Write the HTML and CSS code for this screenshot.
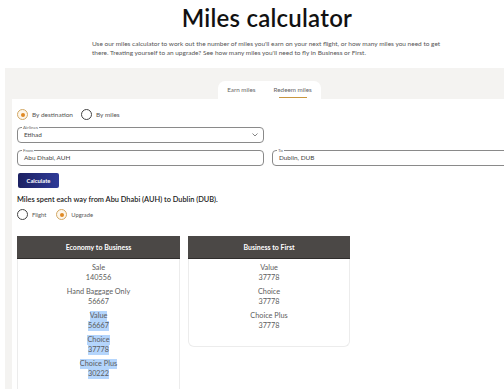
FILE: index.html
```html
<!DOCTYPE html>
<html lang="en">
<head>
  <meta charset="UTF-8" />
  <meta name="viewport" content="width=device-width, initial-scale=1.0"/>
  <title>Miles calculator</title>
  <link rel="stylesheet" href="styles.css">
</head>
<body>
  <div class="page">
    <header class="intro">
      <h1>Miles calculator</h1>
      <p>Use our miles calculator to work out the number of miles you'll earn on your next flight, or how many miles you need to get there. Treating yourself to an upgrade? See how many miles you'll need to fly in Business or First.</p>
    </header>

    <section class="calc">
      <div class="tabs">
        <span class="tab">Earn miles</span>
        <span class="tab active">Redeem miles</span>
      </div>

      <div class="calc-card">
        <div class="radio-row">
          <label class="radio checked"><span class="dot"></span>By destination</label>
          <label class="radio"><span class="dot"></span>By miles</label>
        </div>

        <fieldset class="field field-half">
          <legend>Airlines</legend>
          <div class="field-value">
            <span>Etihad</span>
            <svg class="chevron" width="6" height="4" viewBox="0 0 6 4"><polyline points="0.5,0.5 3,3 5.5,0.5" fill="none" stroke="#666" stroke-width="0.8"/></svg>
          </div>
        </fieldset>

        <div class="route">
          <fieldset class="field">
            <legend>From</legend>
            <div class="field-value">Abu Dhabi, AUH</div>
          </fieldset>
          <fieldset class="field">
            <legend>To</legend>
            <div class="field-value">Dublin, DUB</div>
          </fieldset>
        </div>

        <button class="btn-calc">Calculate</button>

        <p class="result-title">Miles spent each way from Abu Dhabi (AUH) to Dublin (DUB).</p>

        <div class="radio-row small">
          <label class="radio"><span class="dot"></span>Flight</label>
          <label class="radio checked"><span class="dot"></span>Upgrade</label>
        </div>

        <div class="fares">
          <div class="fare-card">
            <div class="fare-head">Economy to Business</div>
            <div class="fare-body">
              <div class="fare"><span>Sale</span><span>140556</span></div>
              <div class="fare"><span>Hand Baggage Only</span><span>56667</span></div>
              <div class="fare sel"><span>Value</span><span>56667</span></div>
              <div class="fare sel"><span>Choice</span><span>37778</span></div>
              <div class="fare sel"><span>Choice Plus</span><span>30222</span></div>
            </div>
          </div>
          <div class="fare-card short">
            <div class="fare-head">Business to First</div>
            <div class="fare-body">
              <div class="fare"><span>Value</span><span>37778</span></div>
              <div class="fare"><span>Choice</span><span>37778</span></div>
              <div class="fare"><span>Choice Plus</span><span>37778</span></div>
            </div>
          </div>
        </div>
      </div>
    </section>
  </div>
</body>
</html>
```
FILE: styles.css
```css
html, body {
  overflow: hidden;
}
body {
  margin: 0;
  background: #fff;
  color: #222;
  font-family: 'Lato', 'Liberation Sans', sans-serif;
}
.page {
  width: 534px;
  min-height: 389px;
}
/* --- ヘッダー --- */
.intro {
  text-align: center;
  padding-top: 3px;
}
.intro h1 {
  margin: 0;
  font-size: 24px;
  line-height: 30px;
  font-weight: 600;
  color: #111;
  letter-spacing: 0.01em;
}
.intro p {
  width: 350px;
  margin: 6px auto 0;
  text-align: left;
  font-size: 6.5px;
  line-height: 9px;
  color: #555;
}
/* --- 計算機 --- */
.calc {
  margin: 11px 0 0 5px;
  background: #f4f3f1;
  padding-top: 13px;
  min-height: 320px;
}
.tabs {
  display: flex;
  justify-content: center;
}
.tab {
  background: #fff;
  font-size: 6.3px;
  color: #666;
  height: 18px;
  line-height: 17px;
  padding: 0 9px;
  position: relative;
}
.tab:first-child {
  border-radius: 7px 0 0 0;
}
.tab.active {
  border-radius: 0 7px 0 0;
}
.tab.active::after {
  content: '';
  position: absolute;
  left: 14px;
  right: 14px;
  bottom: 1px;
  height: 1px;
  background: #c8963e;
}
.calc-card {
  margin-left: 7px;
  background: #fff;
  padding: 10px 5px 0;
}
.radio-row {
  display: flex;
  gap: 8px;
  height: 11px;
  align-items: center;
}
.radio {
  display: flex;
  align-items: center;
  gap: 4px;
  font-size: 6.5px;
  color: #555;
}
.radio .dot {
  width: 9px;
  height: 9px;
  border: 1px solid #444;
  border-radius: 50%;
  box-sizing: content-box;
  display: flex;
  align-items: center;
  justify-content: center;
}
.radio.checked .dot {
  border-color: #d2a865;
  background: #fdf6ea;
}
.radio.checked .dot::after {
  content: '';
  width: 4px;
  height: 4px;
  border-radius: 50%;
  background: #e08a25;
}
.field {
  margin: 0;
  padding: 0 6px 2px;
  border: 1px solid #8a8a8a;
  border-radius: 4px;
  min-width: 0;
  box-sizing: border-box;
}
.field legend {
  font-size: 4.6px;
  line-height: 5px;
  color: #666;
  padding: 0 1px;
  margin-left: -2px;
}
.field-value {
  display: flex;
  align-items: center;
  justify-content: space-between;
  font-size: 6.4px;
  line-height: 10px;
  color: #444;
}
.field-half {
  width: 247px;
  margin-top: 5px;
}
.chevron {
  margin-right: -1px;
}
.route {
  display: grid;
  grid-template-columns: 247px 247px;
  gap: 8px;
  margin-top: 5px;
}
.btn-calc {
  display: block;
  margin: 7px 0 0 1px;
  width: 41px;
  height: 15px;
  padding: 0;
  border: none;
  border-radius: 2px;
  background: linear-gradient(90deg, #1c2162, #2f3b98);
  color: #fff;
  font-family: inherit;
  font-size: 5.8px;
  font-weight: 700;
}
.result-title {
  margin: 7px 0 0;
  font-size: 7.4px;
  line-height: 10px;
  font-weight: 600;
  color: #222;
}
.radio-row.small {
  margin-top: 4px;
}
.radio-row.small .radio {
  font-size: 5.8px;
}
.radio-row.small .radio:first-child {
  margin-right: 2px;
}
/* --- 結果カード --- */
.fares {
  display: flex;
  gap: 8px;
  align-items: flex-start;
  margin-top: 16px;
}
.fare-card {
  width: 163px;
  border: 1px solid #ececec;
  border-top: none;
  border-radius: 0 0 6px 6px;
  box-sizing: border-box;
  min-height: 160px;
}
.fare-card.short {
  width: 162px;
  min-height: 0;
}
.fare-head {
  background: #4b4846;
  color: #fff;
  font-size: 7px;
  font-weight: 700;
  text-align: center;
  height: 22px;
  line-height: 22px;
  margin: 0 -1px;
  border-bottom: 1px solid #2f2d2c;
}
.fare-body {
  padding: 4px 0 15px;
  text-align: center;
}
.fare {
  display: flex;
  flex-direction: column;
  align-items: center;
  font-size: 7.3px;
  line-height: 10px;
  color: #5c5c5c;
  margin-bottom: 4px;
}
.fare:last-child {
  margin-bottom: 0;
}
.fare.sel span {
  background: #b4d5fc;
}
```
